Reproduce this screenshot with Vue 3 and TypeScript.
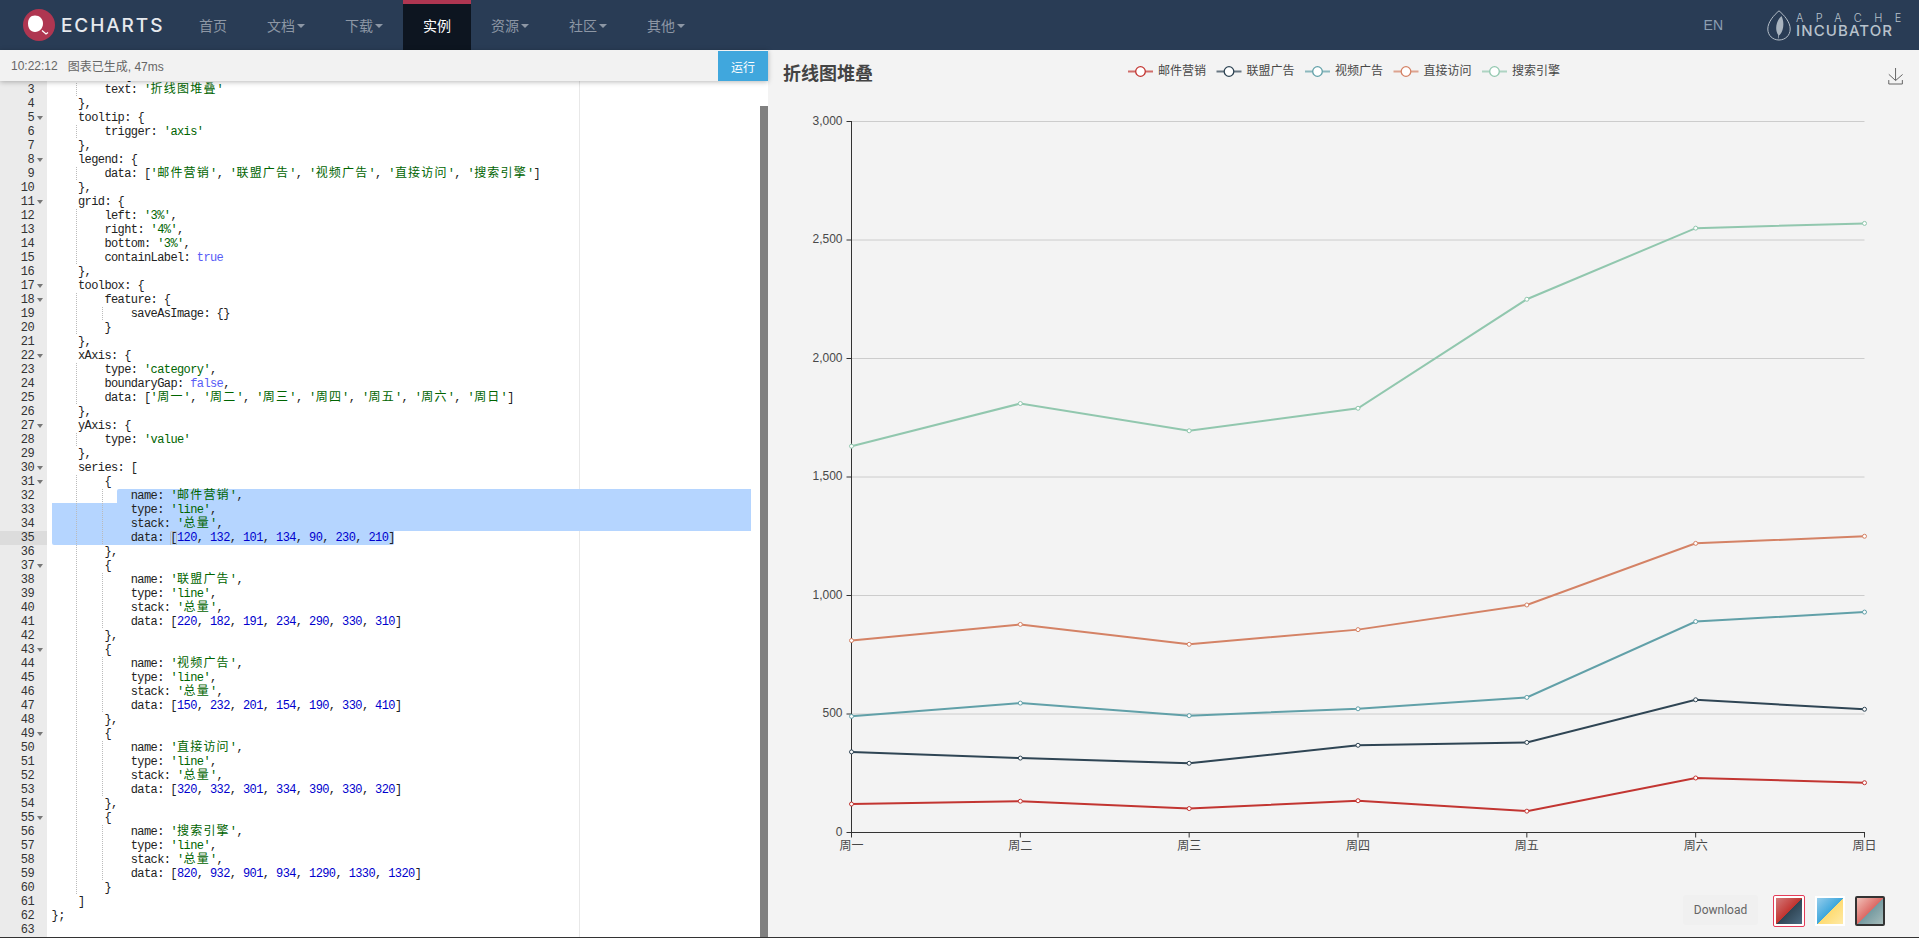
<script setup lang="ts">
interface Token { text: string; kind: string }

const source = `    title: {
        text: '折线图堆叠'
    },
    tooltip: {
        trigger: 'axis'
    },
    legend: {
        data: ['邮件营销', '联盟广告', '视频广告', '直接访问', '搜索引擎']
    },
    grid: {
        left: '3%',
        right: '4%',
        bottom: '3%',
        containLabel: true
    },
    toolbox: {
        feature: {
            saveAsImage: {}
        }
    },
    xAxis: {
        type: 'category',
        boundaryGap: false,
        data: ['周一', '周二', '周三', '周四', '周五', '周六', '周日']
    },
    yAxis: {
        type: 'value'
    },
    series: [
        {
            name: '邮件营销',
            type: 'line',
            stack: '总量',
            data: [120, 132, 101, 134, 90, 230, 210]
        },
        {
            name: '联盟广告',
            type: 'line',
            stack: '总量',
            data: [220, 182, 191, 234, 290, 330, 310]
        },
        {
            name: '视频广告',
            type: 'line',
            stack: '总量',
            data: [150, 232, 201, 154, 190, 330, 410]
        },
        {
            name: '直接访问',
            type: 'line',
            stack: '总量',
            data: [320, 332, 301, 334, 390, 330, 320]
        },
        {
            name: '搜索引擎',
            type: 'line',
            stack: '总量',
            data: [820, 932, 901, 934, 1290, 1330, 1320]
        }
    ]
};
`

const foldable = new Set([2, 5, 8, 11, 17, 18, 22, 27, 30, 31, 37, 43, 49, 55])

function tokenize(text: string): Token[] {
  const out: Token[] = []
  const re = /('[^']*')|(\b\d+\b)|(\b(?:true|false)\b)/g
  let last = 0
  let m: RegExpExecArray | null
  while ((m = re.exec(text))) {
    if (m.index > last) out.push({ text: text.slice(last, m.index), kind: 'plain' })
    if (m[1]) {
      for (const part of m[1].split(/([\u4e00-\u9fff]+)/)) {
        if (part) out.push({ text: part, kind: /[\u4e00-\u9fff]/.test(part) ? 'str cjk' : 'str' })
      }
    } else if (m[2]) out.push({ text: m[2], kind: 'num' })
    else out.push({ text: m[3], kind: 'bool' })
    last = m.index + m[0].length
  }
  if (last < text.length) out.push({ text: text.slice(last), kind: 'plain' })
  return out
}

const lines = source.split('\n').map((raw, i) => {
  const body = raw.trimStart()
  const levels = (raw.length - body.length) / 4
  const n = i + 2
  return {
    n,
    levels,
    tokens: tokenize(body),
    fold: foldable.has(n),
    sel: n === 32 ? 'sel-first' : n === 33 || n === 34 ? 'sel-mid' : n === 35 ? 'sel-last' : '',
  }
})

const navItems = [
  { label: '首页', caret: false, active: false },
  { label: '文档', caret: true, active: false },
  { label: '下载', caret: true, active: false },
  { label: '实例', caret: false, active: true },
  { label: '资源', caret: true, active: false },
  { label: '社区', caret: true, active: false },
  { label: '其他', caret: true, active: false },
]

const X0 = 851.5
const XSTEP = (1864.5 - 851.5) / 6
const Y0 = 832.5
const YSCALE = (832.5 - 121.5) / 3000

const days = ['周一', '周二', '周三', '周四', '周五', '周六', '周日']
const xs = days.map((_, i) => X0 + i * XSTEP)
const yTicks = [0, 500, 1000, 1500, 2000, 2500, 3000].map((v) => ({
  v,
  y: Y0 - v * YSCALE,
  label: v.toLocaleString('en-US'),
}))

const rawSeries = [
  { name: '邮件营销', color: '#c23531', x: 1128, data: [120, 132, 101, 134, 90, 230, 210] },
  { name: '联盟广告', color: '#2f4554', x: 1216.5, data: [220, 182, 191, 234, 290, 330, 310] },
  { name: '视频广告', color: '#61a0a8', x: 1305, data: [150, 232, 201, 154, 190, 330, 410] },
  { name: '直接访问', color: '#d48265', x: 1393.5, data: [320, 332, 301, 334, 390, 330, 320] },
  { name: '搜索引擎', color: '#91c7ae', x: 1482, data: [820, 932, 901, 934, 1290, 1330, 1320] },
]

const totals = [0, 0, 0, 0, 0, 0, 0]
const series = rawSeries.map((s) => {
  const pts = s.data.map((v, i) => {
    totals[i] += v
    return { x: xs[i], y: Y0 - totals[i] * YSCALE }
  })
  return { ...s, pts, points: pts.map((p) => `${p.x},${p.y}`).join(' ') }
})
</script>

<template>
  <div class="page">
    <header class="navbar">
      <div class="brand">
        <svg class="logo" width="32" height="32" viewBox="0 0 32 32">
          <circle cx="16" cy="16" r="16" fill="#af3651" />
          <path d="M12 6.500c4.600 0 8 3.500 8 8 0 4.600-3.400 8.500-8 8.500s-7-3.900-7-8.500c0-4.500 2.400-8 7-8z" fill="#fff" />
          <path d="M19 21.500l4 3.500 2-1.500" fill="none" stroke="#fff" stroke-width="1.300" />
        </svg>
        <span class="wordmark">ECHARTS</span>
      </div>
      <nav class="nav">
        <a v-for="item in navItems" :key="item.label" class="nav-item" :class="{ active: item.active }">
          {{ item.label }}<i v-if="item.caret" class="caret"></i>
        </a>
      </nav>
      <div class="nav-right">
        <span class="lang">EN</span>
        <svg class="feather" width="24" height="31" viewBox="0 0 24 31">
          <path d="M12 .8C17 5 23.200 12 23.200 19c0 6.500-5 11-11.200 11S.8 25.500.8 19C.8 12 7 5 12 .8z" fill="none" stroke="#b4bec8" stroke-width="1" />
          <path d="M14.500 6c2 4 2.500 9 1 14-.9 3-2.400 4.500-3.500 5.500l-.5 3h-.6l.3-3.500C9 22 8.600 17 10 13c1-3 2.800-5.500 4.500-7z" fill="#a9b4bf" />
        </svg>
        <div class="apache">
          <span class="apache-top">APACHE</span>
          <span class="apache-bottom">INCUBATOR</span>
        </div>
      </div>
    </header>

    <main class="main">
      <section class="left">
        <div class="toolbar">
          <span class="time">10:22:12</span>
          <span class="msg">图表已生成, 47ms</span>
          <button class="run">运行</button>
        </div>
        <div class="editor">
          <div class="print-margin"></div>
          <div class="scroll-thumb"></div>
          <div class="code-lines">
            <div v-for="line in lines" :key="line.n" class="row">
              <div class="gutter" :class="{ current: line.n === 35 }">
                <span class="num-cell">{{ line.n }}</span>
                <i v-if="line.fold" class="fold"></i>
              </div>
              <div class="code">
                <div v-if="line.sel" class="sel" :class="line.sel"></div>
                <div v-if="line.n === 35" class="bracket"></div>
                <div class="txt">
                  <span
                    v-for="g in line.levels"
                    :key="g"
                    class="indent"
                    :class="{ guide: g < line.levels }"
                  ></span>
                  <span v-for="(t, ti) in line.tokens" :key="ti" :class="t.kind">{{ t.text }}</span>
                </div>
              </div>
            </div>
          </div>
        </div>
      </section>

      <section class="right">
        <svg class="chart" width="1151" height="838" viewBox="768 50 1151 838">
          <text x="783" y="80" class="title">折线图堆叠</text>

          <g v-for="s in series" :key="'l' + s.name">
            <line :x1="s.x" :x2="s.x + 25" y1="71.5" y2="71.5" :stroke="s.color" stroke-width="2" opacity="0.7" />
            <circle :cx="s.x + 12.5" cy="71.5" r="4.800" fill="#fff" :stroke="s.color" stroke-width="1.300" />
            <text :x="s.x + 30" y="75" class="label">{{ s.name }}</text>
          </g>

          <g transform="translate(1887.500 68) scale(0.276)">
            <path
              d="M4.700,22.900L29.300,45.500L54.700,23.400M4.600,43.600L4.600,58L53.800,58L53.800,43.600M29.200,45.100L29.200,0"
              fill="none"
              stroke="#666"
              stroke-width="1"
              vector-effect="non-scaling-stroke"
            />
          </g>

          <line
            v-for="t in yTicks.slice(1)"
            :key="'g' + t.v"
            :x1="X0"
            x2="1864.500"
            :y1="t.y"
            :y2="t.y"
            stroke="#ccc"
          />
          <line :x1="X0" :x2="X0" y1="121" y2="833" stroke="#333" />
          <line x1="851" x2="1865" y1="832.500" y2="832.500" stroke="#333" />
          <g v-for="t in yTicks" :key="'t' + t.v">
            <line x1="846.500" :x2="X0" :y1="t.y" :y2="t.y" stroke="#333" />
            <text x="842.500" :y="t.y + 3" text-anchor="end" class="label">{{ t.label }}</text>
          </g>
          <g v-for="(d, i) in days" :key="d">
            <line :x1="xs[i]" :x2="xs[i]" y1="832.500" y2="837.500" stroke="#333" />
            <text :x="xs[i]" y="850" text-anchor="middle" class="label">{{ d }}</text>
          </g>

          <g v-for="s in series" :key="s.name">
            <polyline :points="s.points" fill="none" :stroke="s.color" stroke-width="2" />
            <circle
              v-for="(p, i) in s.pts"
              :key="i"
              :cx="p.x"
              :cy="p.y"
              r="2"
              fill="#fff"
              :stroke="s.color"
              stroke-width="1"
            />
          </g>
        </svg>
        <div class="controls">
          <button class="download">Download</button>
          <span class="swatch selected"><i class="grad grad-a"></i></span>
          <span class="swatch plain"><i class="grad grad-b"></i></span>
          <span class="swatch dark"><i class="grad grad-c"></i></span>
        </div>
      </section>
    </main>
  </div>
</template>

<style>
html,
body {
  margin: 0;
  padding: 0;
  background: #f3f3f3;
}
</style>

<style scoped>
.page {
  display: flex;
  flex-direction: column;
  height: 938px;
  overflow: hidden;
  font-family: "Liberation Sans", "Noto Sans CJK SC", sans-serif;
  box-sizing: border-box;
  border-bottom: 1px solid #333;
}

.navbar {
  display: flex;
  align-items: stretch;
  flex: none;
  height: 50px;
  background: #293c55;
}
.brand {
  display: flex;
  align-items: center;
  gap: 6px;
  flex: none;
  width: 156px;
  padding-left: 23px;
}
.logo {
  display: block;
  flex: none;
}
.wordmark {
  font-family: Inter, sans-serif;
  font-size: 19px;
  font-weight: 500;
  letter-spacing: 1.900px;
  color: #e6e9ed;
  line-height: 1;
}
.nav {
  display: flex;
}
.nav-item {
  display: flex;
  align-items: center;
  padding: 0 20px;
  font-size: 14px;
  color: #8d97a5;
  box-sizing: border-box;
}
.nav-item.active {
  background: #0d1520;
  color: #fff;
  border-top: 4px solid #af3651;
  padding-bottom: 4px;
}
.caret {
  display: inline-block;
  width: 0;
  height: 0;
  margin: 2px 0 0 2px;
  border-left: 4px solid transparent;
  border-right: 4px solid transparent;
  border-top: 4px solid #8d97a5;
}
.nav-right {
  display: flex;
  align-items: center;
  margin-left: auto;
  padding-right: 24px;
}
.lang {
  font-size: 14px;
  color: #8c9fb2;
  margin-right: 44px;
}
.feather {
  display: block;
  flex: none;
  margin-right: 5px;
}
.apache {
  display: flex;
  flex-direction: column;
  width: 99px;
  color: #b8c2cc;
}
.apache-top {
  font-family: Inter, sans-serif;
  font-size: 11px;
  font-weight: 300;
  letter-spacing: 12.400px;
  line-height: 12px;
  white-space: nowrap;
}
.apache-bottom {
  font-family: Inter, sans-serif;
  font-size: 15px;
  font-weight: 500;
  line-height: 14px;
  letter-spacing: 1.100px;
  white-space: nowrap;
}

.main {
  display: flex;
  flex: 1;
  min-height: 0;
}
.left {
  display: flex;
  flex-direction: column;
  flex: none;
  width: 768px;
  background: #fff;
}
.toolbar {
  position: relative;
  z-index: 3;
  display: flex;
  align-items: center;
  flex: none;
  height: 31px;
  padding-left: 11px;
  box-sizing: border-box;
  background: #f2f2f2;
  box-shadow: 0 1px 5px rgba(0, 0, 0, 0.28);
  font-size: 12px;
  color: #666;
}
.msg {
  margin-left: 10px;
}
.run {
  align-self: flex-end;
  width: 50px;
  height: 30px;
  margin-left: auto;
  padding: 0;
  border: 0;
  background: #40a7dd;
  color: #fff;
  font-family: inherit;
  font-size: 12px;
}

.editor {
  position: relative;
  flex: 1;
  min-height: 0;
  overflow: hidden;
  background: #fff;
}
.print-margin {
  position: absolute;
  top: 0;
  bottom: 0;
  left: 579px;
  width: 1px;
  background: #e8e8e8;
}
.scroll-thumb {
  position: absolute;
  z-index: 2;
  top: 25px;
  right: 0;
  bottom: 0;
  width: 8px;
  background: #808080;
}
.code-lines {
  margin-top: -12px;
  font-family: "Liberation Mono", "Noto Sans CJK SC", monospace;
  font-size: 12px;
  letter-spacing: -0.600px;
  color: #222;
}
.row {
  display: flex;
  height: 14px;
  line-height: 14px;
}
.gutter {
  position: relative;
  flex: none;
  width: 47px;
  background: #ebebeb;
  color: #333;
}
.gutter.current {
  background: #dcdcdc;
}
.num-cell {
  position: absolute;
  right: 13px;
}
.fold {
  position: absolute;
  top: 5px;
  left: 37px;
  width: 0;
  height: 0;
  border-left: 3px solid transparent;
  border-right: 3px solid transparent;
  border-top: 4px solid #777;
}
.code {
  position: relative;
  flex: 1;
  min-width: 0;
}
.sel {
  position: absolute;
  top: 0;
  bottom: 0;
  background: #b5d5ff;
}
.sel-first {
  left: 70px;
  right: 17px;
  border-top-left-radius: 2px;
}
.sel-mid {
  left: 4.600px;
  right: 17px;
}
.sel-last {
  left: 4.600px;
  width: 342.400px;
  border-bottom-left-radius: 2px;
  border-bottom-right-radius: 2px;
}
.bracket {
  position: absolute;
  top: 0;
  left: 123.400px;
  width: 6.600px;
  height: 14px;
  box-sizing: border-box;
  border: 1px solid #c0c0c0;
  border-bottom: 0;
  border-radius: 2px 2px 0 0;
}
.txt {
  position: relative;
  padding-left: 4.600px;
  white-space: pre;
}
.indent {
  display: inline-block;
  width: 26.400px;
  height: 14px;
  vertical-align: top;
}
.indent.guide {
  background: repeating-linear-gradient(to bottom, #bbb 0, #bbb 1px, transparent 1px, transparent 2px) no-repeat;
  background-size: 1px 100%;
  background-position: calc(100% - 1px) 0;
}
.str {
  color: #006400;
}
.cjk {
  letter-spacing: 1.200px;
}
.num {
  color: #0000cd;
}
.bool {
  color: #585cf6;
}

.right {
  display: flex;
  flex-direction: column;
  flex: 1;
  min-width: 0;
  background: #f3f3f3;
}
.chart {
  display: block;
  flex: none;
}
.title {
  font-family: "Liberation Sans", "Noto Sans CJK SC", sans-serif;
  font-size: 18px;
  font-weight: 700;
  fill: #444;
}
.label {
  font-family: "Liberation Sans", "Noto Sans CJK SC", sans-serif;
  font-size: 12px;
  fill: #484848;
}
.controls {
  display: flex;
  align-items: flex-start;
  justify-content: flex-end;
  flex: 1;
  padding: 7px 34px 0 0;
}
.download {
  width: 75px;
  height: 30px;
  margin-right: 15px;
  padding: 0;
  border: 0;
  border-radius: 3px;
  background: #f0f0f0;
  color: #666;
  font-family: Roboto, sans-serif;
  font-size: 12px;
}
.swatch {
  display: block;
  box-sizing: border-box;
  width: 30px;
  height: 30px;
  margin: 1px 0 0 10px;
}
.swatch.selected {
  width: 32px;
  height: 32px;
  margin: 0;
  padding: 2px;
  background: #fff;
  border: 1px solid #e43c59;
  border-radius: 2px;
}
.swatch.plain {
  padding: 2px;
  background: #fff;
}
.swatch.dark {
  padding: 2px;
  background: #333;
  border-radius: 2px;
}
.grad {
  display: block;
  width: 100%;
  height: 100%;
}
.grad-a {
  background: linear-gradient(135deg, #d27a7a 0%, #c23531 50%, #2f4554 50%, #4d6c82 100%);
}
.grad-b {
  background: linear-gradient(135deg, #95cdec 0%, #3fa7dc 50%, #fedb72 50%, #ffeaa6 100%);
}
.grad-c {
  background: linear-gradient(135deg, #f0c0b8 0%, #dd6b66 50%, #759aa0 50%, #a6bcbb 100%);
}
</style>
